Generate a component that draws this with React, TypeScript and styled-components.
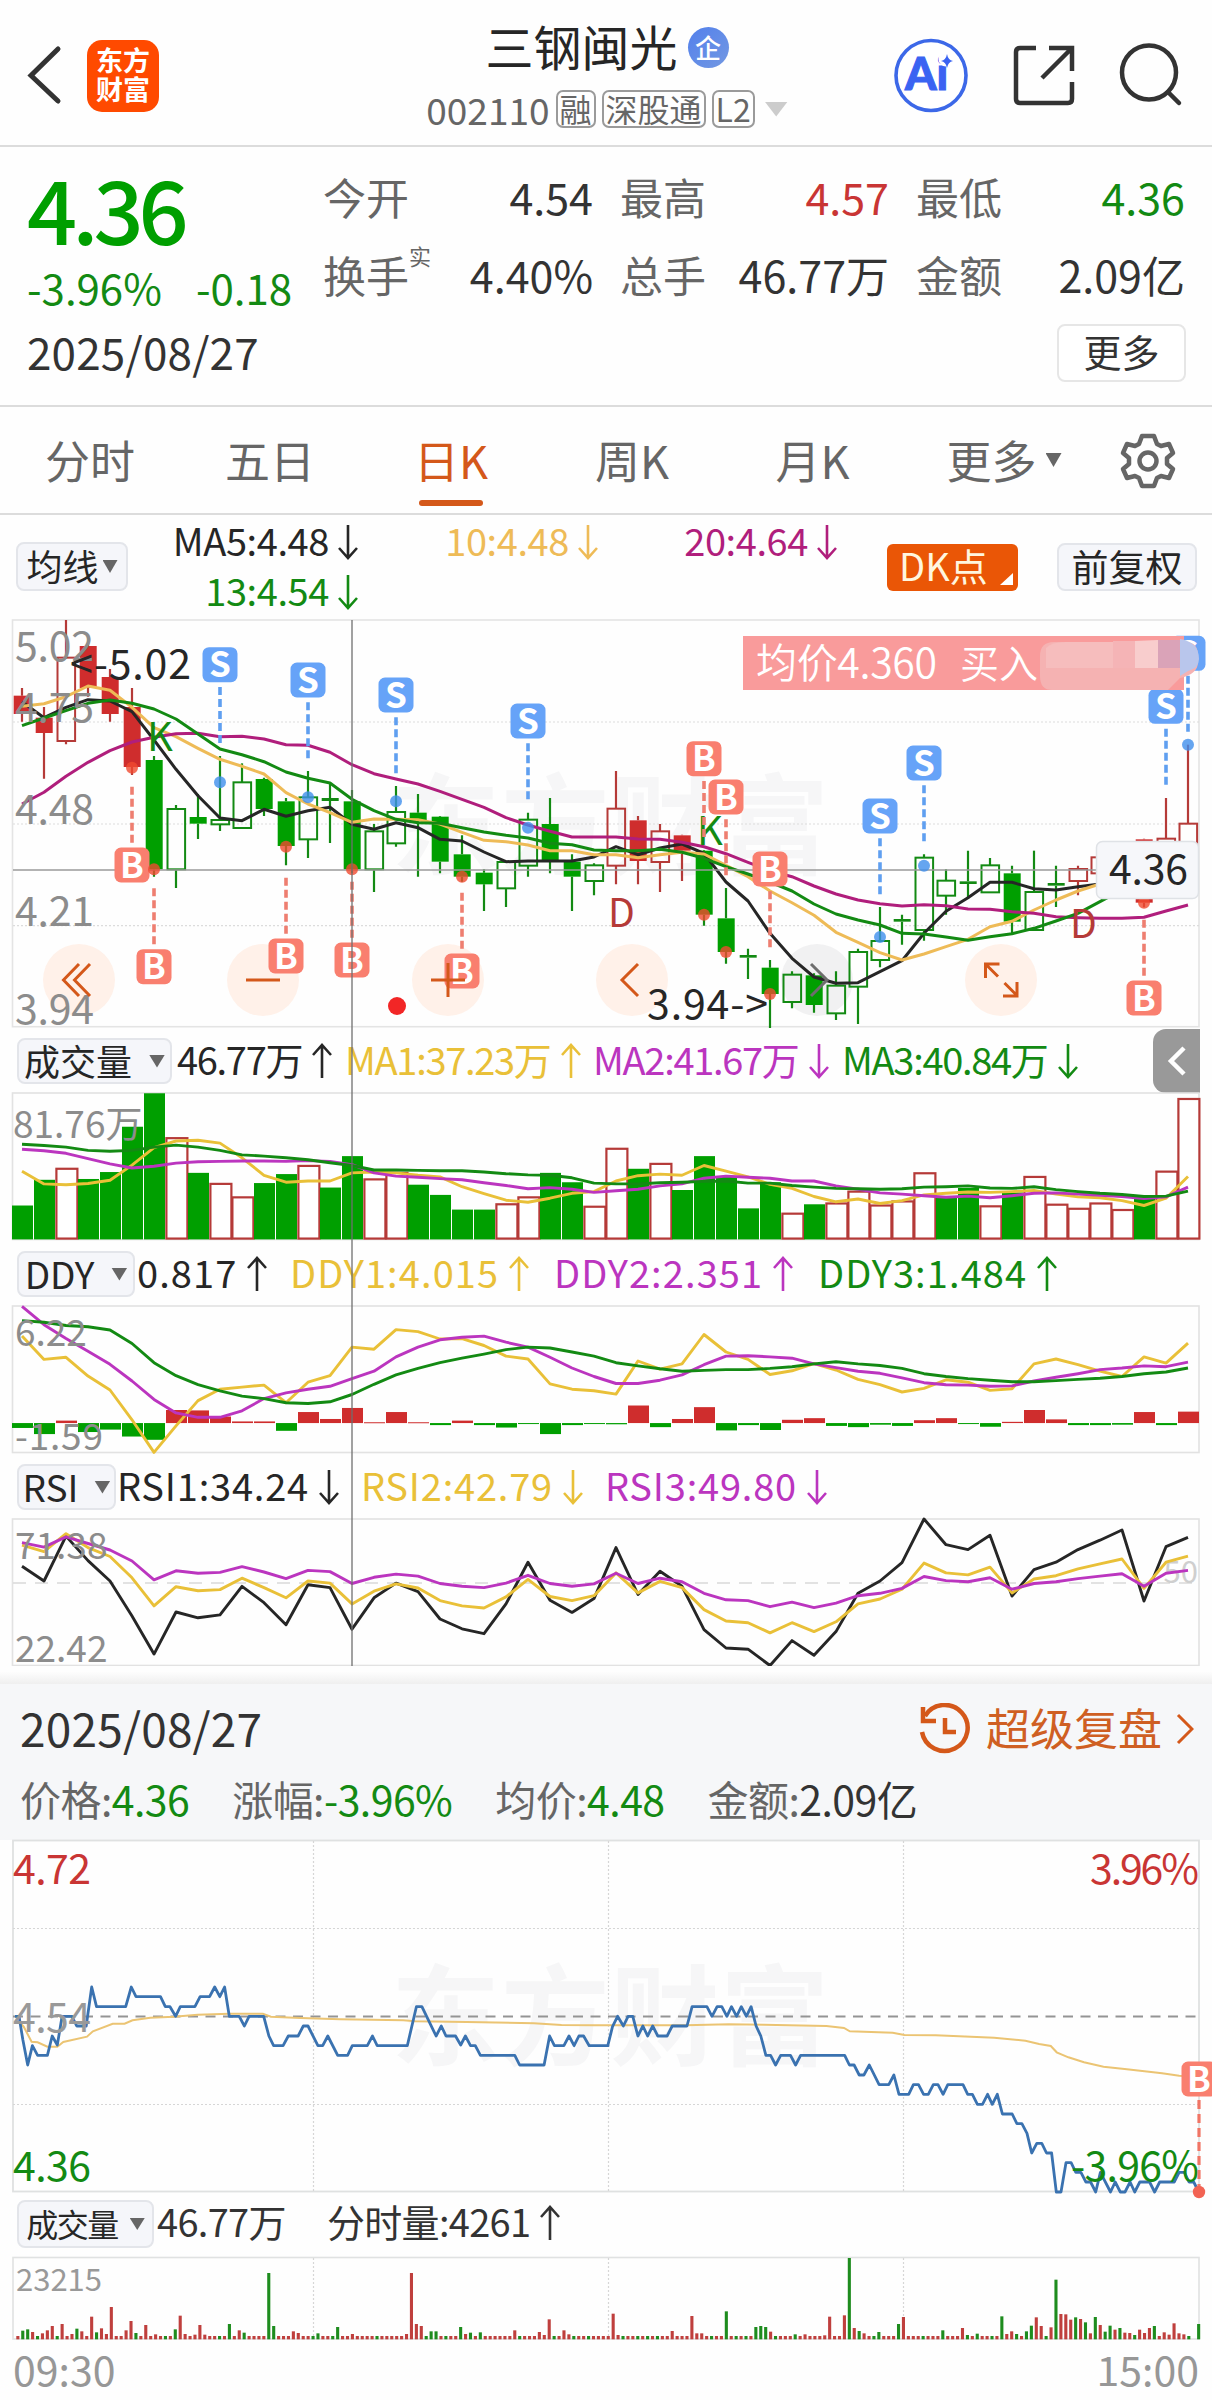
import React from "react";
import styled, { createGlobalStyle, css } from "styled-components";

const FONT = `"Noto Sans CJK SC", "Noto Sans", sans-serif`;
const C = {
  green: "#009f00",
  greenLine: "#138a13",
  red: "#cf2d2d",
  redLine: "#b53a38",
  black: "#262626",
  ink: "#333333",
  grey: "#666666",
  label: "#8c8c8c",
  yellow: "#e9c038",
  gold: "#eebb57",
  magenta: "#b01e7c",
  purple: "#bb35bf",
  orange: "#d4581a",
  line: "#dcdcdc",
  blue: "#3a72b0",
  buy: "#f97f6f",
  sell: "#66a3f8",
};

const GlobalStyle = createGlobalStyle`
  * { box-sizing: border-box; }
  body { margin: 0; background: #fff; font-family: ${FONT}; }
  svg { display: block; flex: none; }
`;

const Page = styled.main`
  position: relative;
  width: 1212px;
  height: 2400px;
  display: flex;
  flex-direction: column;
  overflow: hidden;
  background: #fefefe;
  color: ${C.ink};
  white-space: nowrap;
  font-family: ${FONT};
`;

/* ---------- header ---------- */
const Header = styled.header`
  height: 147px;
  flex: none;
  display: grid;
  grid-template-columns: 332px 1fr 330px;
  border-bottom: 2px solid ${C.line};
`;
const HeaderLeft = styled.div`
  display: flex;
  align-items: flex-start;
  padding: 40px 0 0 26px;
  gap: 25px;
`;
const Logo = styled.div`
  width: 72px;
  height: 72px;
  border-radius: 15px;
  background: #ff4a00;
  color: #fff;
  font-size: 27px;
  font-weight: 700;
  line-height: 29px;
  text-align: center;
  padding-top: 5px;
`;
const HeaderCenter = styled.div`
  display: flex;
  flex-direction: column;
  align-items: center;
  padding: 13px 0 0 0;
`;
const TitleRow = styled.div`
  display: flex;
  align-items: center;
  gap: 10px;
  font-size: 48px;
  line-height: 64px;
  color: ${C.black};
`;
const CompanyBadge = styled.span`
  width: 41px;
  height: 41px;
  border-radius: 50%;
  background: linear-gradient(135deg, #5280ec, #7398e2);
  color: #fff;
  font-size: 26px;
  font-weight: 500;
  line-height: 40px;
  text-align: center;
  margin-top: 5px;
`;
const CodeRow = styled.div`
  display: flex;
  align-items: center;
  gap: 6px;
  height: 38px;
  margin-top: 13px;
  font-size: 37px;
  line-height: 36px;
  color: ${C.grey};
`;
const MarketTag = styled.span`
  height: 38px;
  border: 2px solid #9a9a9a;
  border-radius: 7px;
  font-size: 32px;
  line-height: 33px;
  padding: 0 2px;
`;
const Caret = styled.i<{ w: number; h: number; color?: string }>`
  width: ${(p) => p.w}px;
  height: ${(p) => p.h}px;
  background: ${(p) => p.color ?? C.grey};
  clip-path: polygon(0 0, 100% 0, 50% 100%);
  flex: none;
`;
const HeaderRight = styled.div`
  display: flex;
  align-items: flex-start;
  padding: 37px 0 0 10px;
  gap: 43px;
`;

/* ---------- quote ---------- */
const Quote = styled.section`
  height: 260px;
  flex: none;
  display: grid;
  grid-template-columns: 323px 1fr;
  border-bottom: 2px solid ${C.line};
`;
const QuoteLeft = styled.div`
  padding: 14px 0 0 27px;
  display: flex;
  flex-direction: column;
`;
const BigPrice = styled.div`
  font-size: 88px;
  font-weight: 500;
  line-height: 92px;
  letter-spacing: -5px;
  color: ${C.green};
`;
const ChangeRow = styled.div`
  display: flex;
  gap: 34px;
  margin-top: 6px;
  font-size: 42px;
  line-height: 56px;
  color: ${C.greenLine};
`;
const DateText = styled.div<{ size: number }>`
  font-size: ${(p) => p.size}px;
  line-height: 60px;
  color: ${C.ink};
  letter-spacing: 0.2px;
`;
const QuoteDate = styled(DateText)`
  margin-top: 6px;
`;
const QuoteRight = styled.div`
  padding: 15px 26px 0 0;
  display: flex;
  flex-direction: column;
`;
const StatGrid = styled.div`
  display: grid;
  grid-template-columns: 270px 269px 269px;
  column-gap: 27px;
  grid-auto-rows: 78px;
`;
const Stat = styled.div`
  display: flex;
  justify-content: space-between;
  align-items: center;
  height: 68px;
`;
const StatLabel = styled.span`
  display: flex;
  align-items: flex-start;
  color: ${C.grey};
  font-size: 43px;
  line-height: 64px;
`;
const Sup = styled.sup`
  font-size: 22px;
  line-height: 22px;
  vertical-align: top;
  margin-top: 2px;
`;
const StatValue = styled.span<{ color?: string }>`
  font-size: 43px;
  line-height: 60px;
  color: ${(p) => p.color ?? C.ink};
`;
const MoreButton = styled.button`
  align-self: flex-end;
  width: 129px;
  height: 58px;
  margin-top: 6px;
  border: 2px solid #e6e6e6;
  border-radius: 8px;
  background: #fff;
  font: 400 38px/48px ${FONT};
  color: ${C.ink};
  padding: 0 0 4px;
`;

/* ---------- tabs ---------- */
const Tabs = styled.nav`
  height: 108px;
  flex: none;
  display: grid;
  grid-template-columns: 180px 180px 182px 180px 181px 182px 127px;
  border-bottom: 2px solid ${C.line};
`;
const Tab = styled.div<{ active?: boolean }>`
  display: flex;
  flex-direction: column;
  align-items: center;
  padding-top: 20px;
  font-size: 45px;
  line-height: 66px;
  color: ${(p) => (p.active ? C.orange : C.grey)};
  ${(p) =>
    p.active &&
    css`
      &::after {
        content: "";
        width: 64px;
        height: 6px;
        border-radius: 3px;
        margin-top: 7px;
        background: ${C.orange};
      }
    `}
`;
const TabInline = styled.span`
  display: flex;
  align-items: center;
  gap: 9px;
  margin-left: 20px;
`;

/* ---------- moving averages ---------- */
const MaBar = styled.section`
  height: 105px;
  flex: none;
  display: flex;
  align-items: flex-start;
  padding-left: 16px;
`;
const Pill = styled.button<{ w: number; h: number; size: number; top?: number; gap?: number; tight?: boolean }>`
  width: ${(p) => p.w}px;
  height: ${(p) => p.h}px;
  margin: ${(p) => p.top ?? 0}px 0 0;
  flex: none;
  display: flex;
  align-items: center;
  justify-content: center;
  gap: ${(p) => p.gap ?? 5}px;
  padding: 0 0 3px;
  border: 2px solid #e3e5ea;
  border-radius: 8px;
  background: #f5f6fa;
  color: ${C.black};
  font: 400 ${(p) => p.size}px/40px ${FONT};
  letter-spacing: ${(p) => (p.tight ? -1.5 : 0)}px;

  ${Caret} {
    margin-top: 3px;
  }
`;
const MaGrid = styled.div`
  display: grid;
  grid-template-columns: 230px 240px 239px;
  grid-auto-rows: 50px;
  width: 709px;
`;
const MaCell = styled.div<{ color: string }>`
  display: flex;
  align-items: center;
  justify-content: flex-end;
  gap: 9px;
  font-size: 38px;
  line-height: 50px;
  letter-spacing: -0.4px;
  color: ${(p) => p.color};

  svg {
    margin-top: 3px;
  }
`;
const DkButton = styled.button`
  position: relative;
  width: 131px;
  height: 47px;
  margin: 29px 0 0 50px;
  border: 0;
  border-radius: 6px;
  background: #ea5606;
  color: #fff6df;
  font: 400 38px/40px ${FONT};
  text-align: left;
  padding: 0 0 6px 12px;
  &::after {
    content: "";
    position: absolute;
    right: 5px;
    bottom: 6px;
    width: 13px;
    height: 12px;
    background: #fff;
    clip-path: polygon(100% 0, 100% 100%, 0 100%);
  }
`;
const RightAligned = styled.div`
  margin-left: auto;
  padding-right: 15px;
`;

/* ---------- indicator legends ---------- */
const Legend = styled.div<{ h: number; pad: number }>`
  height: ${(p) => p.h}px;
  flex: none;
  display: flex;
  align-items: flex-start;
  padding: ${(p) => p.pad}px 0 0 17px;
`;
const LegendGrid = styled.div<{ cols: string; left?: number; spacing?: number }>`
  display: grid;
  grid-template-columns: ${(p) => p.cols};
  margin-left: ${(p) => p.left ?? 5}px;
  height: 40px;
  align-items: center;
  letter-spacing: ${(p) => p.spacing ?? 0}px;
`;
const LegendItem = styled.span<{ color: string }>`
  display: flex;
  align-items: center;
  gap: 10px;
  color: ${(p) => p.color};
  font-size: 38px;
  line-height: 42px;

  svg {
    margin-top: 4px;
  }
`;
const CollapseTab = styled.button`
  width: 47px;
  height: 64px;
  margin: -9px 12px 0 auto;
  border: 0;
  padding: 0 0 0 14px;
  border-radius: 13px 0 0 13px;
  background: #999;
`;

/* ---------- charts ---------- */
const Plot = styled.svg`
  width: 1212px;
  overflow: visible;
`;
const Txt = styled.text<{ size: number; color: string; weight?: number }>`
  font-family: ${FONT};
  font-size: ${(p) => p.size}px;
  font-weight: ${(p) => p.weight ?? 400};
  fill: ${(p) => p.color};
  white-space: pre;
`;
const Crosshair = styled.div`
  position: absolute;
  left: 351px;
  top: 620px;
  width: 2px;
  height: 1046px;
  background: rgba(110, 110, 110, 0.65);
`;

/* ---------- replay panel ---------- */
const PanelGap = styled.div`
  height: 18px;
  flex: none;
  background: linear-gradient(#fefefe 30%, #efefef);
`;
const Panel = styled.section`
  height: 156px;
  flex: none;
  background: #f6f7f9;
  padding: 10px 18px 0 20px;
`;
const PanelTop = styled.div`
  display: flex;
  align-items: center;
  justify-content: space-between;
  height: 66px;
`;
const Replay = styled.div`
  display: flex;
  align-items: center;
  gap: 14px;
  font-size: 44px;
  line-height: 60px;
  color: #cf5f23;
`;
const PanelStats = styled.div`
  display: flex;
  gap: 43px;
  margin-top: 8px;
  font-size: 41px;
  line-height: 60px;
  letter-spacing: -0.55px;
  color: ${C.grey};
`;
const Num = styled.b<{ color: string }>`
  font-weight: 400;
  color: ${(p) => p.color};
`;
const Axis = styled.div`
  display: flex;
  justify-content: space-between;
  padding: 0 13px 0 13px;
  font-size: 41px;
  line-height: 56px;
  color: #979797;
`;

/* ---------- data ---------- */
const cx = (i: number) => 22 + 22 * i;
const toPath = (values: number[], f: (v: number) => number) =>
  values.map((v, i) => `${i ? "L" : "M"}${cx(i)} ${f(v).toFixed(1)}`).join("");

type Kind = "R" | "r" | "G" | "g";
// kind, body top, body bottom, high, low (thirds of a pixel below y=600)
const candles: [Kind, number, number, number, number][] = [
  ["R", 287, 342, 264, 365], ["R", 353, 399, 321, 536], ["r", 173, 423, 60, 433], ["R", 138, 264, 130, 290],
  ["R", 231, 342, 207, 365], ["R", 321, 501, 264, 525], ["G", 480, 808, 468, 830], ["g", 627, 808, 615, 864],
  ["G", 651, 671, 582, 717], ["g", 660, 673, 468, 693], ["g", 547, 684, 490, 684], ["G", 537, 627, 533, 648],
  ["G", 604, 738, 594, 796], ["g", 592, 718, 513, 774], ["G", 594, 603, 549, 729], ["G", 604, 808, 570, 820],
  ["g", 694, 808, 672, 876], ["g", 636, 730, 558, 740], ["G", 638, 660, 582, 830], ["G", 650, 785, 648, 820],
  ["G", 763, 830, 706, 845], ["G", 818, 853, 808, 933], ["g", 786, 865, 785, 921], ["g", 659, 797, 638, 830],
  ["G", 672, 785, 594, 820], ["G", 785, 830, 763, 933], ["g", 796, 843, 790, 886], ["r", 626, 797, 513, 853],
  ["R", 661, 783, 648, 853], ["r", 694, 786, 672, 876], ["R", 706, 752, 704, 843], ["G", 752, 944, 750, 977],
  ["G", 955, 1056, 864, 1091], ["G", 1065, 1073, 1046, 1137], ["G", 1103, 1182, 1080, 1284], ["g", 1124, 1206, 1114, 1225],
  ["G", 1126, 1215, 1120, 1238], ["g", 1157, 1240, 1114, 1260], ["g", 1056, 1160, 1046, 1272], ["g", 1023, 1080, 921, 1102],
  ["G", 957, 965, 944, 1034], ["g", 773, 990, 763, 1022], ["g", 842, 887, 808, 944], ["G", 844, 852, 752, 896],
  ["g", 796, 877, 774, 877], ["G", 820, 965, 797, 1000], ["g", 876, 990, 752, 990], ["G", 849, 857, 797, 921],
  ["r", 807, 843, 797, 886], ["r", 772, 820, 772, 820], ["r", 760, 800, 750, 820], ["R", 718, 908, 716, 922],
  ["r", 716, 800, 594, 800], ["r", 671, 860, 434, 860],
];
const ma5 = [305,353,322,299,303,335,420,508,587,654,662,628,649,632,622,673,688,668,683,718,723,756,785,783,783,783,771,740,764,744,732,760,846,903,1000,1075,1131,1150,1148,1115,1082,1000,934,893,847,847,866,870,860,852,840];
const ma10 = [319,311,290,258,271,322,383,410,445,478,499,522,578,612,638,667,657,658,659,672,697,721,725,735,752,752,764,764,773,764,757,762,796,830,873,908,946,997,1027,1058,1080,1062,1040,1018,980,964,930,900,873,852,840];
const ma13 = [377,354,332,310,300,310,327,357,402,447,464,485,516,535,549,598,632,658,668,670,683,696,706,714,730,734,750,752,752,748,757,775,800,822,846,873,912,942,960,975,1000,1002,1011,1021,1010,1001,985,963,940,905,870];
const ma20 = [612,577,529,487,452,426,412,401,400,410,409,417,434,436,457,494,521,537,552,574,598,622,653,675,694,711,711,711,717,718,727,740,761,787,812,830,858,882,900,911,918,914,917,927,928,935,940,950,953,955,955,952,933,915];

// kind, candle index, badge centre, dot centre (same unit as the candles)
const signals: ["B" | "S", number, number, number][] = [
  ["S", 9, 194, 547], ["S", 13, 240, 592], ["S", 17, 285, 604], ["S", 23, 363, 683], ["S", 39, 648, 1011],
  ["S", 41, 489, 797], ["S", 52, 319, 0], ["S", 53, 160, 434],
  ["B", 5, 795, 503], ["B", 6, 1100, 808], ["B", 12, 1068, 740], ["B", 15, 1080, 808], ["B", 20, 1113, 830],
  ["B", 31, 476, 944], ["B", 32, 591, 1056], ["B", 34, 807, 1182], ["B", 51, 1194, 908],
];

const volKinds = "GGrGGGGrGrrGGrGGrrGGGGrrGGrrGrGGGGGrGrrrrrGGrGrrrrrGrr";
const volTops = [430,367,340,365,348,237,155,265,350,377,410,375,353,333,386,309,366,350,379,404,440,440,427,410,350,373,433,291,340,328,392,309,360,437,373,450,427,425,396,430,420,351,410,387,432,398,360,428,438,425,441,407,347,169];
const vol1 = [346,377,379,376,368,331,288,272,270,277,313,356,373,370,370,350,348,350,356,360,384,401,417,422,412,400,396,370,357,353,356,332,346,360,378,388,408,421,414,425,418,404,400,397,398,396,393,402,409,411,418,430,412,359];
const vol2 = [292,296,302,315,328,338,334,326,323,322,321,321,322,320,322,330,350,358,361,364,367,374,381,389,386,390,398,394,390,382,377,363,358,361,363,370,370,382,390,399,402,406,410,407,411,406,400,399,402,405,408,413,409,385];
const vol3 = [280,283,287,295,297,295,287,282,287,295,306,309,313,318,325,332,343,343,344,345,345,348,352,355,356,362,375,377,377,374,373,371,370,375,375,381,385,388,389,390,389,385,384,382,387,388,384,391,396,400,403,408,407,395];

const ddyBars = [975,990,957,985,979,996,1004,931,932,947,959,959,982,936,953,926,961,936,961,968,957,968,974,965,990,968,965,966,920,973,953,924,981,968,980,955,951,970,973,967,970,956,951,965,972,960,931,954,968,968,967,936,968,935];
const ddy1 = [750,807,802,848,882,955,1035,970,908,880,875,870,913,863,847,777,782,734,739,757,756,773,799,806,867,880,884,892,811,831,818,746,789,807,844,835,817,833,856,869,887,878,857,863,883,879,818,806,820,836,849,801,816,767];
const ddy2 = [677,722,756,787,819,860,905,938,949,949,933,903,889,880,873,854,836,801,777,759,753,750,765,777,802,828,849,866,866,858,845,820,799,798,801,804,818,827,836,841,852,864,869,870,873,872,860,851,842,832,828,823,825,814];
const ddy3 = [712,716,724,727,735,768,815,847,869,884,897,903,913,915,911,893,868,845,829,815,804,794,783,777,779,789,799,815,823,830,836,834,832,832,829,825,818,813,818,822,829,842,849,854,858,862,862,859,856,853,849,842,838,828];

const rsi1 = [1314,1350,1240,1300,1350,1436,1529,1426,1440,1433,1363,1403,1457,1359,1366,1468,1391,1355,1376,1443,1467,1479,1406,1304,1397,1427,1393,1268,1383,1326,1363,1469,1514,1517,1557,1496,1532,1474,1380,1350,1305,1198,1261,1273,1238,1387,1322,1304,1273,1250,1225,1399,1266,1243];
const rsi2 = [1262,1278,1234,1268,1290,1342,1411,1364,1374,1371,1343,1366,1391,1350,1355,1406,1375,1357,1367,1398,1411,1416,1389,1346,1388,1398,1386,1330,1379,1351,1366,1420,1448,1452,1477,1452,1474,1450,1406,1394,1370,1306,1330,1335,1316,1379,1345,1337,1320,1308,1296,1368,1304,1289];
const rsi3 = [1256,1267,1242,1258,1274,1301,1347,1325,1331,1329,1315,1328,1344,1324,1327,1356,1341,1333,1338,1356,1363,1366,1355,1336,1356,1363,1357,1331,1356,1343,1352,1380,1396,1398,1413,1402,1415,1404,1386,1380,1368,1339,1349,1352,1342,1370,1356,1352,1344,1338,1332,1363,1331,1324];

const morning = "38,529 48,529 58,600 70,675 82,617 95,646 120,646 132,588 145,615 157,529 182,529 194,558 218,558 232,441 244,500 318,500 332,441 344,470 406,470 418,500 430,500 444,529 456,500 493,500 506,470 530,470 543,441 556,470 568,441 580,529 605,529 618,558 630,529 667,529 680,588 692,617 716,617 729,588 754,588 767,558 779,558 804,617 816,617 829,588 854,646 879,646 891,617 929,617 942,588 954,617 1030,617 1053,500 1067,500 1103,588 1116,558 1128,588 1152,588 1165,615 1177,588 1190,617 1202,617 1215,646 1302,646 1314,675 1376,675 1390,588 1402,617 1426,617 1439,588 1452,617 1464,588 1476,588 1490,617 1538,617";
const afternoon = "20,617 32,560 45,529 60,558 72,529 84,529 97,588 110,558 122,588 135,558 148,588 172,588 185,558 223,558 236,500 274,500 287,529 300,500 312,500 325,529 337,500 350,529 362,500 375,529 387,500 400,558 412,588 425,646 437,646 450,675 463,646 488,646 501,675 514,646 627,646 639,675 651,675 664,705 676,705 690,675 715,734 740,734 753,705 766,763 791,763 803,734 816,734 829,763 841,763 854,734 866,734 879,763 891,734 930,734 942,763 954,763 967,793 980,793 993,763 1005,793 1018,763 1031,822 1056,822 1068,851 1081,851 1094,880 1106,939 1119,910 1132,910 1144,939 1157,939 1169,1056 1181,1056 1194,968 1207,968 1219,997 1232,997 1245,1026 1257,1026 1270,1056 1282,997 1308,1056 1320,1026 1333,1056 1345,1056 1358,1026 1370,1056 1383,1026 1408,1026 1421,1056 1434,1026 1471,1026 1484,997 1497,997 1509,1026 1521,1026 1534,1056";
const avgMorning = "48,545 60,560 80,605 95,607 120,620 145,620 160,606 220,590 235,574 285,551 315,551 335,541 380,533 440,530 500,524 580,521 665,521 685,530 760,534 860,538 1020,541 1050,544 1180,546 1350,550 1420,555 1500,556";
const avgAfternoon = "0,556 220,556 330,553 420,554 580,558 625,564 640,574 750,578 780,585 860,586 1010,593 1090,602 1125,612 1155,618 1170,637 1200,652 1240,667 1290,680 1350,688 1440,700 1484,707 1510,709";
const project = (s: string, x0: number, k: number) =>
  s.split(" ").map((p) => {
    const [x, y] = p.split(",").map(Number);
    return `${(x0 + x / k).toFixed(1)},${(1840 + y / 3).toFixed(1)}`;
  }).join(" ");
const join = (a: string, b: string) => `${project(a, 0, 2.529)} ${project(b, 600, 2.562)}`;

const volMorning = "57g422 70g418 82r426 95g438 107r430 120r421 132r408 145g438 157r402 182r432 194g416 207r424 232r380 244g427 256r415 269r432 281r351 319r421 331r393 344g429 369r405 393r433 418g438 443g418 456r377 468r432 493r434 505r405 517r434 555g438 580g402 605r421 617g428 680g249 692g408 741r424 754r429 792g438 804g430 841g438 854g411 891r432 954g438 1029r432 1041r249 1053r402 1065r408 1078g438 1090g424 1103g424 1128g438 1165g411 1177r432 1190g428 1215g427 1302r421 1314g438 1364r426 1377r435 1389r388 1401g438 1426r421 1439r433 1452g438 1489g438";
const volAfternoon = "34r371 46r435 59g438 97g438 122g438 147g438 185r423 236r378 248r430 261r430 286g438 324g364 349g438 374g438 400g411 412g408 425g411 438r425 450g438 500g433 526r433 576r436 588r380 626r376 639g204 651r414 664g423 677r430 702g438 714g426 765g402 778r381 828g438 879g421 929r414 942g435 967g431 1005g438 1030g379 1043r432 1055r424 1068g432 1093g424 1106g407 1118r382 1131r408 1144g438 1157r412 1169g269 1181r372 1194r373 1207r389 1219g382 1232r387 1245g397 1257r430 1270g381 1282r405 1295g425 1307g407 1320r419 1333g414 1345r428 1358r429 1371g435 1383r419 1396r429 1408r414 1421g408 1446r427 1459r434 1471r400 1484r430 1497r433 1509g438 1521g448 1532g402";
const minuteVolumes = (() => {
  const bars = Array.from({ length: 241 }, () => ({ up: true, top: 438 }));
  const put = (s: string, x0: number, k: number) =>
    s.split(" ").forEach((t) => {
      const m = /^(\d+)([rg])(\d+)$/.exec(t)!;
      const i = Math.round((x0 + Number(m[1]) / k - 17.8) / 4.92);
      if (bars[i]) bars[i] = { up: m[2] === "r", top: Number(m[3]) };
    });
  put(volMorning, 0, 2.529);
  put(volAfternoon, 600, 2.562);
  return bars;
})();

/* ---------- drawing pieces ---------- */
const Arrow = ({ up }: { up?: boolean }) => (
  <svg width="20" height="36" viewBox="0 0 20 36" fill="none" stroke="currentColor" strokeWidth="2.6">
    {up ? <path d="M10 35V2M1 12l9-10 9 10" /> : <path d="M10 1v33M1 24l9 10 9-10" />}
  </svg>
);

const Line = ({ values, f, color, w = 3 }: { values: number[]; f: (v: number) => number; color: string; w?: number }) => (
  <path d={toPath(values, f)} fill="none" stroke={color} strokeWidth={w} strokeLinejoin="round" />
);

const Badge = ({ kind, x, y }: { kind: "B" | "S"; x: number; y: number }) => (
  <g>
    <rect x={x - 17.5} y={y - 17.5} width="35" height="35" rx="6.5" fill={kind === "B" ? C.buy : C.sell} />
    <Txt x={x} y={y + 12.8} size={35} color="#fff" weight={700} textAnchor="middle">{kind}</Txt>
  </g>
);

const Watermark = ({ y }: { y: number }) => (
  <Txt x="391" y={y} size={109} color="#f6f6f7" weight={700} textLength="438">东方财富</Txt>
);

const k3 = (v: number) => 600 + v / 3;
const sub = (v: number) => 1030 + v / 2.45;

const Candle = ({ i }: { i: number }) => {
  const [kind, t, b, h, l] = candles[i];
  const x = cx(i);
  const red = kind.toLowerCase() === "r";
  const stroke = red ? C.redLine : C.greenLine;
  const solid = kind === "R" || kind === "G";
  return (
    <g>
      <path d={`M${x} ${k3(h)}V${k3(t)}M${x} ${k3(b)}V${k3(l)}`} stroke={stroke} strokeWidth="2.2" />
      {solid ? (
        <rect x={x - 8.3} y={k3(t)} width="17" height={(b - t) / 3} fill={red ? C.red : b - t < 12 ? C.greenLine : C.green} />
      ) : (
        <rect x={x - 8.5} y={k3(t)} width="17.6" height={(b - t) / 3} fill="none" stroke={stroke} strokeWidth="2" />
      )}
    </g>
  );
};

const KLineChart = () => (
  <Plot height="408" viewBox="0 620 1212 408">
    <Watermark y={866} />
    {[79, 263, 448, 632, 1001].map((x) => <circle key={x} cx={x} cy="980" r="36" fill="#fff1e9" />)}
    <circle cx="817" cy="980" r="36" fill="#f1f1f2" />
    <rect x="12.5" y="620" width="1186.5" height="406.7" fill="none" stroke="#e4e4e4" strokeWidth="1.6" />
    {[366, 672, 977].map((v) => <path key={v} d={`M13 ${k3(v)}H1199`} stroke="#dcdcdc" strokeWidth="1.2" strokeDasharray="2 2" />)}
    {candles.map((_, i) => <Candle key={i} i={i} />)}
    <Line values={ma5} f={k3} color={C.black} />
    <Line values={ma10} f={k3} color={C.gold} />
    <Line values={ma20} f={k3} color={C.magenta} />
    <Line values={ma13} f={k3} color={C.greenLine} />
    <path d="M13 870H1199" stroke="#9a9a9a" strokeWidth="1.6" />
    {[[182, "5.02"], [367, "4.75"], [672, "4.48"], [977, "4.21"], [1272, "3.94"]].map(([v, t]) => (
      <Txt key={t} x="15" y={k3(Number(v))} size={41} color={C.label} textLength="79">{t}</Txt>
    ))}
    <Txt x="147" y={k3(452)} size={40} color={C.greenLine}>K</Txt>
    <Txt x="697" y={k3(735)} size={40} color={C.greenLine}>K</Txt>
    <Txt x="608" y={k3(981)} size={39} color={C.redLine}>D</Txt>
    <Txt x="1070" y={k3(1013)} size={39} color={C.redLine}>D</Txt>
    {signals.map(([kind, i, y, dot], n) => {
      const dir = kind === "S" || (i > 30 && i < 40) ? 1 : -1;
      const color = kind === "S" ? "#5f9ff0" : "#ee7e70";
      return (
        <g key={n}>
          <path d={`M${cx(i)} ${k3(y + dir * (dir > 0 ? 67 : 235))}v56`} stroke={color} strokeWidth="3.6" strokeDasharray="8 4" />
          {dot > 0 && <circle cx={cx(i)} cy={k3(dot)} r="6" fill={kind === "S" ? "#3f8eec" : "#f04a30"} opacity="0.8" />}
          <Badge kind={kind} x={cx(i)} y={k3(y)} />
        </g>
      );
    })}
    <Txt x="70" y={k3(237)} size={41} color={C.black} textLength="121">{"<-5.02"}</Txt>
    <Txt x="647" y={k3(1257)} size={41} color={C.black} textLength="121">{"3.94->"}</Txt>
    <g fill="none" stroke={C.orange} strokeWidth="3">
      <path d="M79 964L63.500 980l15.500 16M90 964L74.500 980l15.500 16" />
      <path d="M246 980h34M431 980h34M448 963v34" />
      <path d="M638 964l-16 16 16 16" />
      <path d="M985.500 978v-14h14M985 963.500l13 13M1017 982v14h-14M1017.500 996l-13-13" />
      <path d="M811 964l16 16-16 16" stroke="#6d6d6d" />
    </g>
    <circle cx="397" cy="1006" r="9" fill="#f22626" />
    <rect x="743" y="636" width="441" height="54" fill="#f99b9b" />
    <Txt x="756" y="678" size={41} color="#fff" weight={350} textLength="181">均价4.360</Txt>
    <Txt x="960" y="678" size={39} color="#fff" weight={350}>买入</Txt>
    <path d="M1054 642h132q12 0 12 14v6q0 12-18 16l-12 12h-116q-12 0-12-14v-20q0-14 14-14z" fill="#f5b2b2" />
    <path d="M1046 648q5-6 20-6h47v26h-67z" fill="#f6bdbd" />
    <path d="M1113 641h22v27h-22z" fill="#f5b4b6" />
    <path d="M1135 641l23-1v28h-23z" fill="#f8cdcd" />
    <path d="M1158 640h22v28h-22z" fill="#daa3b8" />
    <path d="M1180 639q19 3 19 20 0 9-11 12l-8 5z" fill="#b9c6ec" />
    <rect x="1096.500" y="841.500" width="102" height="57" rx="6" fill="#f6f7fa" stroke="#dfe2e6" strokeWidth="1.500" />
    <Txt x="1109" y="884" size={41} color={C.black} textLength="79">4.36</Txt>
  </Plot>
);

const Frame = ({ y, h = 146.5 }: { y: number; h?: number }) => (
  <rect x="12.5" y={y} width="1186.5" height={h} fill="none" stroke="#e2e2e2" strokeWidth="1.6" />
);

const VolumeChart = () => (
  <Plot height="147" viewBox="0 1093 1212 147">
    <Frame y={1093} />
    {volTops.map((t, i) =>
      volKinds[i] === "G" ? (
        <rect key={i} x={cx(i) - 10} y={sub(t)} width="21" height={(513 - t) / 2.45} fill={C.green} />
      ) : (
        <rect key={i} x={cx(i) - 9.6} y={sub(t)} width="21" height={(511 - t) / 2.45} fill="#fff" stroke={C.redLine} strokeWidth="2.200" />
      )
    )}
    <Txt x="13" y={sub(265)} size={37} color={C.label}>81.76万</Txt>
    <Line values={vol1} f={sub} color={C.yellow} w={2.9} />
    <Line values={vol2} f={sub} color={C.purple} w={2.9} />
    <Line values={vol3} f={sub} color={C.greenLine} w={2.9} />
  </Plot>
);

const DdyChart = () => (
  <Plot height="147" viewBox="0 1306 1212 147">
    <Frame y={1306} />
    {ddyBars.map((v, i) => (
      <rect key={i} x={cx(i) - 10} y={sub(Math.min(v, 963))} width="21" height={Math.max(1, Math.abs(v - 963) / 2.45)} fill={v < 963 ? C.red : C.green} />
    ))}
    <Line values={ddy1} f={sub} color={C.yellow} w={2.9} />
    <Line values={ddy2} f={sub} color={C.purple} w={2.9} />
    <Line values={ddy3} f={sub} color={C.greenLine} w={2.9} />
    <Txt x="15" y={sub(773)} size={37} color={C.label}>6.22</Txt>
    <Txt x="15" y={sub(1030)} size={37} color={C.label} textLength="88">-1.59</Txt>
  </Plot>
);

const RsiChart = () => (
  <Plot height="147" viewBox="0 1519 1212 147">
    <Frame y={1519} />
    <path d={`M13 ${sub(1355)}H1199`} stroke="#d9d9d9" strokeWidth="1.500" strokeDasharray="13 9" />
    <Txt x="1198" y={sub(1355)} size={31} color="#cfcfcf" textAnchor="end">50</Txt>
    <Line values={rsi1} f={sub} color={C.black} w={2.9} />
    <Line values={rsi2} f={sub} color={C.yellow} w={2.9} />
    <Line values={rsi3} f={sub} color={C.purple} w={2.9} />
    <Txt x="15" y={sub(1295)} size={37} color={C.label}>71.38</Txt>
    <Txt x="15" y={sub(1548)} size={37} color={C.label}>22.42</Txt>
  </Plot>
);

const MinuteChart = () => (
  <Plot height="353" viewBox="0 1840 1212 353">
    <Watermark y={2057} />
    <rect x="13" y="1840.500" width="1186" height="351" fill="none" stroke="#dfe1e1" strokeWidth="1.800" />
    <g stroke="#d6d6d6" strokeWidth="1.200" strokeDasharray="2 2">
      <path d="M313.500 1841V2191M608.500 1841V2191M903.500 1841V2191M13 1928.500H1199M13 2104.500H1199" />
    </g>
    <path d="M13 2016.500H1199" stroke="#949494" strokeWidth="1.800" strokeDasharray="10 7.500" />
    <polyline points={join(avgMorning, avgAfternoon)} fill="none" stroke="#ebc473" strokeWidth="2" />
    <polyline points={join(morning, afternoon)} fill="none" stroke={C.blue} strokeWidth="2.800" strokeLinejoin="round" />
    <Txt x="13" y="1884" size={41} color="#c93534" textLength="78">4.72</Txt>
    <Txt x="13" y="2032" size={41} color="#999" textLength="78">4.54</Txt>
    <Txt x="13" y="2181" size={41} color={C.greenLine} textLength="78">4.36</Txt>
    <Txt x="1199" y="1884" size={41} color="#c93534" textAnchor="end" textLength="109">3.96%</Txt>
    <Txt x="1199" y="2181" size={41} color={C.greenLine} textAnchor="end" textLength="128">-3.96%</Txt>
    <path d="M1199 2100V2186" stroke="#f07565" strokeWidth="3.200" strokeDasharray="9 5" />
    <circle cx="1199" cy="2192" r="6.200" fill="#f26353" />
    <Badge kind="B" x={1199} y={2079} />
  </Plot>
);

const MinuteVolumeChart = () => (
  <Plot height="83" viewBox="0 2257 1212 83">
    <rect x="13" y="2257.500" width="1186" height="81.500" fill="none" stroke="#e0e2e2" strokeWidth="1.600" />
    <path d="M313.500 2258v81M608.500 2258v81M903.500 2258v81" stroke="#d6d6d6" strokeWidth="1.200" strokeDasharray="2 2" />
    {minuteVolumes.map((b, i) => (
      <rect key={i} x={16.3 + 4.92 * i} y={2190 + b.top / 3} width="3.1" height={(448 - b.top) / 3} fill={b.up ? "#bf3f3d" : "#1e8c1e"} />
    ))}
    <Txt x="16" y="2291" size={31} color="#999" textLength="86">23215</Txt>
  </Plot>
);

type Entry = [string, string, boolean | null];
const Entries = ({ items }: { items: Entry[] }) => (
  <>
    {items.map(([text, color, up]) => (
      <LegendItem key={text} color={color}>
        {text}
        {up !== null && <Arrow up={up} />}
      </LegendItem>
    ))}
  </>
);

export default function App() {
  return (
    <Page>
      <GlobalStyle />
      <Header>
        <HeaderLeft>
          <svg width="36" height="72" viewBox="26 40 36 72" fill="none" stroke={C.ink} strokeWidth="5" strokeLinecap="round">
            <path d="M58 49L31 75.500L58 101" />
          </svg>
          <Logo>东方<br />财富</Logo>
        </HeaderLeft>
        <HeaderCenter>
          <TitleRow>三钢闽光<CompanyBadge>企</CompanyBadge></TitleRow>
          <CodeRow>
            002110<MarketTag>融</MarketTag><MarketTag>深股通</MarketTag><MarketTag>L2</MarketTag>
            <Caret w={23} h={15} color="#ccc" style={{ marginLeft: 4 }} />
          </CodeRow>
        </HeaderCenter>
        <HeaderRight>
          <svg width="78" height="78" viewBox="892 37 78 78">
            <circle cx="931" cy="75.500" r="35" fill="#fff" stroke="#3c68e8" strokeWidth="3.600" />
            <text x="905" y="90" fontFamily="Lato, sans-serif" fontWeight="900" fontSize="45" fill="#3a63f2" stroke="#3a63f2" strokeWidth="1">Ai</text>
            <circle cx="946" cy="59" r="7.500" fill="#fff" />
            <path d="M947 54q1 6 6 7-5 1-6 7-1-6-6-7 5-1 6-7z" fill="#3a63f2" />
          </svg>
          <svg width="62" height="78" viewBox="1012 37 62 78" fill="none" stroke={C.ink} strokeWidth="4.500">
            <path d="M1035 48h-16q-4 0-4 4v47q0 4 4 4h48q4 0 4-4V82M1048 48h23v23M1071 48l-30 30" />
          </svg>
          <svg width="66" height="78" viewBox="1118 37 66 78" fill="none" stroke={C.ink} strokeWidth="4.500" strokeLinecap="round">
            <circle cx="1149" cy="72.500" r="27" />
            <path d="M1168 92l11 11" />
          </svg>
        </HeaderRight>
      </Header>

      <Quote>
        <QuoteLeft>
          <BigPrice>4.36</BigPrice>
          <ChangeRow><span>-3.96%</span><span>-0.18</span></ChangeRow>
          <QuoteDate size={44}>2025/08/27</QuoteDate>
        </QuoteLeft>
        <QuoteRight>
          <StatGrid>
            <Stat><StatLabel>今开</StatLabel><StatValue>4.54</StatValue></Stat>
            <Stat><StatLabel>最高</StatLabel><StatValue color="#c93534">4.57</StatValue></Stat>
            <Stat><StatLabel>最低</StatLabel><StatValue color={C.greenLine}>4.36</StatValue></Stat>
            <Stat><StatLabel>换手<Sup>实</Sup></StatLabel><StatValue>4.40%</StatValue></Stat>
            <Stat><StatLabel>总手</StatLabel><StatValue>46.77万</StatValue></Stat>
            <Stat><StatLabel>金额</StatLabel><StatValue>2.09亿</StatValue></Stat>
          </StatGrid>
          <MoreButton>更多</MoreButton>
        </QuoteRight>
      </Quote>

      <Tabs>
        <Tab>分时</Tab>
        <Tab>五日</Tab>
        <Tab active>日K</Tab>
        <Tab>周K</Tab>
        <Tab>月K</Tab>
        <Tab><TabInline>更多<Caret w={16} h={14} /></TabInline></Tab>
        <Tab>
          <svg width="60" height="60" viewBox="-30 -30 60 60" fill="none" stroke={C.grey} strokeWidth="4.500" strokeLinejoin="round" style={{ marginTop: 4, marginRight: 1 }}>
            <path d="M-6-25H6L9-17Q11-16 13-15L21-17 25-8 19-3V3L25 8 21 17 13 15Q11 16 9 17L6 25H-6L-9 17Q-11 16-13 15L-21 17-25 8-19 3V-3L-25-8-21-17-13-15Q-11-16-9-17Z" />
            <circle r="8.500" />
          </svg>
        </Tab>
      </Tabs>

      <MaBar>
        <Pill w={112} h={49} size={36} top={27} gap={4}>均线<Caret w={15} h={13} /></Pill>
        <MaGrid>
          <MaCell color={C.black}>MA5:4.48<Arrow /></MaCell>
          <MaCell color={C.gold}>10:4.48<Arrow /></MaCell>
          <MaCell color={C.magenta}>20:4.64<Arrow /></MaCell>
          <MaCell color={C.greenLine}>13:4.54<Arrow /></MaCell>
        </MaGrid>
        <DkButton>DK点</DkButton>
        <RightAligned><Pill w={140} h={48} size={37} top={28}>前复权</Pill></RightAligned>
      </MaBar>

      <KLineChart />

      <Legend h={65} pad={10}>
        <Pill w={155} h={46} size={36} gap={17}>成交量<Caret w={16} h={13} /></Pill>
        <LegendGrid cols="168px 248px 249px 240px" spacing={-1.3}>
          <Entries items={[["46.77万", C.black, true], ["MA1:37.23万", C.yellow, true], ["MA2:41.67万", C.purple, false], ["MA3:40.84万", C.greenLine, false]]} />
        </LegendGrid>
        <CollapseTab>
          <svg width="20" height="30" viewBox="0 0 20 30" fill="none" stroke="#fff" strokeWidth="4.500"><path d="M17 2L4 15l13 13" /></svg>
        </CollapseTab>
      </Legend>
      <VolumeChart />

      <Legend h={66} pad={11}>
        <Pill w={118} h={46} size={37} gap={17}>DDY<Caret w={16} h={13} /></Pill>
        <LegendGrid cols="153px 264px 264px 250px" left={2} spacing={1.1}>
          <Entries items={[["0.817", C.black, true], ["DDY1:4.015", C.yellow, true], ["DDY2:2.351", C.purple, true], ["DDY3:1.484", C.greenLine, true]]} />
        </LegendGrid>
      </Legend>
      <DdyChart />

      <Legend h={66} pad={11}>
        <Pill w={99} h={46} size={37} gap={16}>RSI<Caret w={16} h={13} /></Pill>
        <LegendGrid cols="244px 244px 240px" left={1} spacing={0.8}>
          <Entries items={[["RSI1:34.24", C.black, false], ["RSI2:42.79", C.yellow, false], ["RSI3:49.80", C.purple, false]]} />
        </LegendGrid>
      </Legend>
      <RsiChart />

      <PanelGap />
      <Panel>
        <PanelTop>
          <DateText size={46}>2025/08/27</DateText>
          <Replay>
            <svg width="54" height="54" viewBox="0 0 54 54" fill="none" stroke={C.orange} strokeWidth="4.500" style={{ marginTop: 5 }}>
              <path d="M7 13A23 23 0 1 1 4 29" />
              <path d="M5 4v14h13" />
              <path d="M27 15v14h11" />
            </svg>
            超级复盘
            <svg width="18" height="32" viewBox="0 0 18 32" fill="none" stroke={C.orange} strokeWidth="3" style={{ marginTop: 3 }}><path d="M2 2l14 14L2 30" /></svg>
          </Replay>
        </PanelTop>
        <PanelStats>
          <span>价格:<Num color={C.greenLine}>4.36</Num></span>
          <span>涨幅:<Num color={C.greenLine}>-3.96%</Num></span>
          <span>均价:<Num color={C.greenLine}>4.48</Num></span>
          <span>金额:<Num color={C.ink}>2.09亿</Num></span>
        </PanelStats>
      </Panel>

      <MinuteChart />
      <Legend h={64} pad={7}>
        <Pill w={137} h={48} size={32} gap={12} tight>成交量<Caret w={15} h={12} /></Pill>
        <LegendGrid cols="170px 250px" left={3} spacing={-0.7}>
          <Entries items={[["46.77万", C.ink, null], ["分时量:4261", C.ink, true]]} />
        </LegendGrid>
      </Legend>
      <MinuteVolumeChart />
      <Axis><span>09:30</span><span>15:00</span></Axis>

      <Crosshair />
    </Page>
  );
}
